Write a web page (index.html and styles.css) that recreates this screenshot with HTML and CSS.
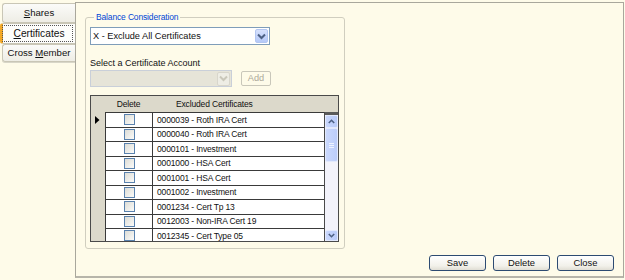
FILE: index.html
```html
<!DOCTYPE html>
<html>
<head>
<meta charset="utf-8">
<link rel="stylesheet" href="styles.css">
</head>
<body>
<div class="app">
  <nav class="tabs">
    <div class="tab"><u>S</u>hares</div>
    <div class="tab active"><u>C</u>ertificates</div>
    <div class="tab">Cross <u>M</u>ember</div>
  </nav>
  <section class="panel">
    <fieldset class="group">
      <legend>Balance Consideration</legend>
      <div class="combo">
        <span class="combo-text">X - Exclude All Certificates</span>
        <span class="drop"><svg width="9" height="7" viewBox="0 0 9 7"><path d="M1 1.5 L4.5 5 L8 1.5" fill="none" stroke="#4d6185" stroke-width="2"/></svg></span>
      </div>
      <div class="label">Select a Certificate Account</div>
      <div class="acct-row">
        <div class="combo disabled">
          <span class="combo-text"></span>
          <span class="drop"><svg width="9" height="7" viewBox="0 0 9 7"><path d="M1 1.5 L4.5 5 L8 1.5" fill="none" stroke="#c9c7ba" stroke-width="2"/></svg></span>
        </div>
        <div class="btn-add">Add</div>
      </div>
      <div class="grid">
        <div class="grid-head">
          <div class="h-rh"></div>
          <div class="h-del">Delete</div>
          <div class="h-cert">Excluded Certificates</div>
        </div>
        <div class="grid-body">
          <div class="rh-col">
            <div class="rh-cell"><svg width="5" height="8" viewBox="0 0 5 8"><path d="M0 0 L4.5 4 L0 8 Z" fill="#000"/></svg></div>
          </div>
          <div class="rows">
            <div class="row"><div class="c-del"><span class="chk"></span></div><div class="c-cert">0000039 - Roth IRA Cert</div></div>
            <div class="row"><div class="c-del"><span class="chk"></span></div><div class="c-cert">0000040 - Roth IRA Cert</div></div>
            <div class="row"><div class="c-del"><span class="chk"></span></div><div class="c-cert">0000101 - Investment</div></div>
            <div class="row"><div class="c-del"><span class="chk"></span></div><div class="c-cert">0001000 - HSA Cert</div></div>
            <div class="row"><div class="c-del"><span class="chk"></span></div><div class="c-cert">0001001 - HSA Cert</div></div>
            <div class="row"><div class="c-del"><span class="chk"></span></div><div class="c-cert">0001002 - Investment</div></div>
            <div class="row"><div class="c-del"><span class="chk"></span></div><div class="c-cert">0001234 - Cert Tp 13</div></div>
            <div class="row"><div class="c-del"><span class="chk"></span></div><div class="c-cert">0012003 - Non-IRA Cert 19</div></div>
            <div class="row"><div class="c-del"><span class="chk"></span></div><div class="c-cert">0012345 - Cert Type 05</div></div>
          </div>
          <div class="vscroll">
            <div class="sb-top"></div>
            <div class="sb-btn"><svg width="7" height="5" viewBox="0 0 7 5"><path d="M0.8 4 L3.5 1.3 L6.2 4" fill="none" stroke="#4d6185" stroke-width="1.6"/></svg></div>
            <div class="sb-thumb"><span></span><span></span><span></span></div>
            <div class="sb-track"></div>
            <div class="sb-btn"><svg width="7" height="5" viewBox="0 0 7 5"><path d="M0.8 1 L3.5 3.7 L6.2 1" fill="none" stroke="#4d6185" stroke-width="1.6"/></svg></div>
          </div>
        </div>
      </div>
    </fieldset>
    <div class="actions">
      <div class="btn">Save</div>
      <div class="btn">Delete</div>
      <div class="btn">Close</div>
    </div>
  </section>
</div>
</body>
</html>
```

FILE: styles.css
```css
html, body {
  margin: 0;
  padding: 0;
}
body {
  width: 625px;
  height: 280px;
  background: #fefbe9;
  font-family: "Liberation Sans", Arial, sans-serif;
  font-size: 9px;
  color: #111;
  overflow: hidden;
}
.app {
  display: flex;
  align-items: flex-start;
}
.tabs {
  width: 75px;
  display: flex;
  flex-direction: column;
  padding-top: 3px;
}
.tab {
  box-sizing: border-box;
  margin-left: 2px;
  width: 73px;
  height: 20px;
  line-height: 18px;
  text-align: center;
  font-size: 9.6px;
  background: linear-gradient(#fbfbf9, #eeede5);
  border: 1px solid #c9c6b6;
  border-right: none;
  border-radius: 3px 0 0 3px;
}
.tab.active {
  margin-left: 0;
  width: 75px;
  height: 21px;
  line-height: 19px;
  background: #fdfdfb;
  border-left: 3px solid #f3a826;
  outline: 1px dotted #555;
  outline-offset: -3px;
  font-size: 10.2px;
}
.tab:last-child {
  height: 18px;
  line-height: 16px;
  margin-top: 0;
  box-shadow: 0 1px 0 #d8d6c8;
}
.panel {
  box-sizing: border-box;
  margin-top: 2px;
  width: 549px;
  height: 276px;
  border: 1px solid #a9a79c;
  border-bottom: 2px solid #b7b5aa;
  display: flex;
  flex-direction: column;
}
.group {
  box-sizing: border-box;
  margin: 9px 0 0 9px;
  padding: 0 4px;
  width: 260px;
  height: 237px;
  border: 1px solid #d0cebf;
  border-radius: 3px;
  min-width: 0;
}
.group legend {
  padding: 0 2px;
  margin-left: 4px;
  font-size: 8.5px;
  letter-spacing: -0.15px;
  line-height: 11px;
  color: #0046d5;
}
.combo {
  box-sizing: border-box;
  margin-top: 4px;
  width: 180px;
  height: 18px;
  border: 1px solid #7f9db9;
  background: #fff;
  display: flex;
  align-items: center;
}
.combo-text {
  flex: 1;
  padding-left: 2px;
  font-size: 9.2px;
  white-space: nowrap;
}
.drop {
  box-sizing: border-box;
  width: 13px;
  height: 14px;
  margin-right: 1px;
  background: linear-gradient(#d6e1fd, #b5c9f8);
  border: 1px solid #b3c6f1;
  border-radius: 2px;
  display: flex;
  align-items: center;
  justify-content: center;
}
.label {
  margin-top: 13px;
  line-height: 11px;
  height: 11px;
}
.acct-row {
  display: flex;
  align-items: center;
  margin-top: 1px;
}
.combo.disabled {
  margin-top: 0;
  width: 142px;
  height: 17px;
  border-color: #c9cfd9;
  background: #e6e4d8;
}
.combo.disabled .drop {
  background: #eeede5;
  border-color: #d8d6cc;
}
.btn-add {
  box-sizing: border-box;
  margin-left: 9px;
  width: 30px;
  height: 15px;
  border: 1px solid #c9c7ba;
  border-radius: 2px;
  color: #aca899;
  text-align: center;
  line-height: 13px;
  font-size: 9.2px;
}
.grid {
  box-sizing: border-box;
  margin-top: 8px;
  width: 249px;
  height: 147px;
  border: 1px solid #4a4a4a;
  display: flex;
  flex-direction: column;
  overflow: hidden;
  font-size: 8.5px;
  letter-spacing: -0.15px;
}
.grid-head {
  display: flex;
  height: 16px;
  line-height: 16px;
  background: #dcd9cb;
  flex: none;
}
.h-rh { width: 14px; }
.h-del { width: 47px; text-align: center; }
.h-cert { padding-left: 24px; }
.grid-body {
  flex: 1;
  display: flex;
  min-height: 0;
}
.rh-col {
  width: 14px;
  background: #dcd9cb;
}
.rh-cell {
  height: 14.5px;
  padding-left: 4px;
  display: flex;
  align-items: center;
  box-sizing: border-box;
  padding-top: 1px;
}
.rows {
  width: 220px;
  background: #fff;
  border-right: 1px solid #4a4a4a;
  box-sizing: border-box;
  overflow: hidden;
}
.row {
  box-sizing: border-box;
  height: 14.5px;
  border-top: 1px solid #3a3a3a;
  display: flex;
  align-items: center;
}
.c-del {
  box-sizing: border-box;
  width: 48px;
  height: 100%;
  border-left: 1px solid #3a3a3a;
  border-right: 1px solid #3a3a3a;
  display: flex;
  align-items: center;
  justify-content: center;
}
.chk {
  box-sizing: border-box;
  width: 11px;
  height: 11px;
  border: 1px solid #5a82ae;
  background: linear-gradient(135deg, #dcdcd6, #fbfbf9);
}
.c-cert {
  padding-left: 4px;
  white-space: nowrap;
}
.vscroll {
  width: 13px;
  display: flex;
  flex-direction: column;
  background: #f3f3fb;
}
.sb-top {
  height: 3px;
  background: #5a5a5a;
  flex: none;
}
.sb-btn {
  box-sizing: border-box;
  height: 13px;
  flex: none;
  background: linear-gradient(90deg, #c9d7fd, #b9cbf9);
  border: 1px solid #e2e9fd;
  border-radius: 2px;
  display: flex;
  align-items: center;
  justify-content: center;
}
.sb-btn:last-child {
  height: 11px;
}
.sb-thumb {
  box-sizing: border-box;
  height: 34px;
  flex: none;
  background: linear-gradient(90deg, #cad8fd, #bccdfa);
  border: 1px solid #e2e9fd;
  border-radius: 2px;
  display: flex;
  flex-direction: column;
  align-items: center;
  justify-content: center;
  gap: 1px;
}
.sb-thumb span {
  width: 5px;
  height: 1px;
  background: #eef3fe;
}
.sb-track {
  flex: 1;
}
.actions {
  display: flex;
  justify-content: flex-end;
  gap: 7px;
  margin: 6px 9px 0 0;
}
.btn {
  box-sizing: border-box;
  width: 57px;
  height: 16px;
  border: 1px solid #2d4b72;
  border-radius: 3px;
  background: linear-gradient(#ffffff, #f2f1ea 70%, #e0ded4);
  text-align: center;
  line-height: 14px;
  font-size: 9.4px;
}
```
